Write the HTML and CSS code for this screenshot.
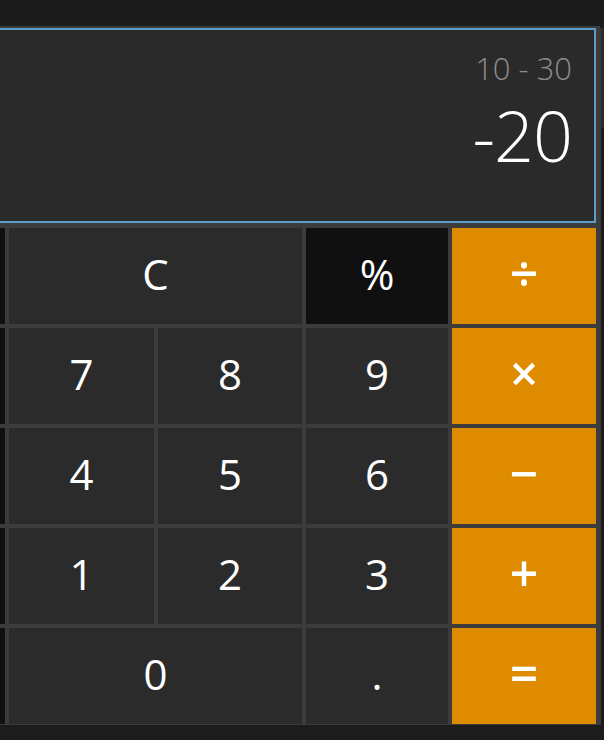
FILE: index.html
```html
<!DOCTYPE html>
<html lang="en">
<head>
<meta charset="utf-8">
<title>Calculator</title>
<link rel="stylesheet" href="styles.css">
</head>
<body>
<div class="topbar"></div>
<div class="stage">
  <div class="calc">
    <div class="display">
      <div class="expr">10 - 30</div>
      <div class="result">-20</div>
    </div>
    <div class="keys">
      <button class="key fn" aria-label="Memory clear"></button>
      <button class="key wide">C</button>
      <button class="key dark">%</button>
      <button class="key op">÷</button>

      <button class="key fn" aria-label="Memory recall"></button>
      <button class="key">7</button>
      <button class="key">8</button>
      <button class="key">9</button>
      <button class="key op">×</button>

      <button class="key fn" aria-label="Memory add"></button>
      <button class="key">4</button>
      <button class="key">5</button>
      <button class="key">6</button>
      <button class="key op">−</button>

      <button class="key fn" aria-label="Memory subtract"></button>
      <button class="key">1</button>
      <button class="key">2</button>
      <button class="key">3</button>
      <button class="key op">+</button>

      <button class="key fn" aria-label="Negate"></button>
      <button class="key wide">0</button>
      <button class="key">.</button>
      <button class="key op">=</button>
    </div>
  </div>
  <div class="rail"><div class="thumb"></div></div>
</div>
</body>
</html>
```

FILE: styles.css
```css
html, body {
  margin: 0;
  padding: 0;
  background: #1c1c1c;
  overflow: hidden;
  width: 604px;
  height: 740px;
}

body {
  font-family: "Open Sans", "DejaVu Sans", sans-serif;
  color: #ffffff;
}

.topbar {
  height: 26px;
  background: #1b1b1b;
}

.stage {
  display: flex;
  margin-left: -144px;
}

.calc {
  width: 736px;
  padding: 2px 4px 1px 4px;
  background: #3c3c3c;
  flex: none;
}

.display {
  height: 191px;
  border: 2px solid #5b9cc9;
  background: #2a2a2a;
  display: flex;
  flex-direction: column;
  align-items: flex-end;
  padding-right: 22px;
}

.expr {
  margin-top: 20px;
  font-size: 31px;
  line-height: 36px;
  font-weight: 300;
  color: #8c8c8c;
  white-space: pre;
}

.result {
  margin-top: 9px;
  font-size: 70px;
  line-height: 80px;
  font-weight: 300;
  color: #ffffff;
  letter-spacing: -1px;
}

.keys {
  margin-top: 5px;
  display: grid;
  grid-template-columns: 145px 145px 144px 142px 144px;
  grid-auto-rows: 96px;
  gap: 4px;
}

.key {
  border: 0;
  margin: 0;
  padding: 0 0 6px 0;
  background: #2b2b2b;
  color: #ffffff;
  font-family: inherit;
  font-size: 42px;
  font-weight: 400;
  display: flex;
  align-items: center;
  justify-content: center;
}

.key.wide {
  grid-column: span 2;
}

.key.fn,
.key.dark {
  background: #101010;
}

.key.op {
  background: #de8b00;
  font-size: 50px;
  font-weight: 600;
}

.rail {
  width: 4px;
  margin-top: 2px;
  border-left: 1px solid #3a3a3a;
  flex: none;
}

.thumb {
  height: 100px;
  background: #2c2c2c;
}
```
